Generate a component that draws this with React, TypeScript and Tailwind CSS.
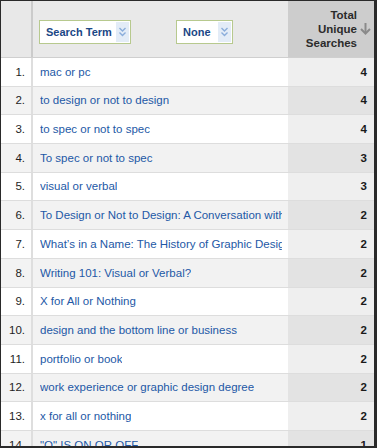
import React from 'react'

const rows = [
  { term: 'mac or pc', count: 4 },
  { term: 'to design or not to design', count: 4 },
  { term: 'to spec or not to spec', count: 4 },
  { term: 'To spec or not to spec', count: 3 },
  { term: 'visual or verbal', count: 3 },
  { term: 'To Design or Not to Design: A Conversation with the Experts', count: 2 },
  { term: 'What\u2019s in a Name: The History of Graphic Design', count: 2 },
  { term: 'Writing 101: Visual or Verbal?', count: 2 },
  { term: 'X for All or Nothing', count: 2 },
  { term: 'design and the bottom line or business', count: 2 },
  { term: 'portfolio or book', count: 2 },
  { term: 'work experience or graphic design degree', count: 2 },
  { term: 'x for all or nothing', count: 2 },
  { term: '"O" IS ON OR OFF', count: 1 },
]

function Chevrons() {
  return (
    <svg width="9" height="12" viewBox="0 0 9 12" fill="none">
      <polyline points="1.5,2 4.5,5 7.5,2" stroke="#8aaddb" strokeWidth="1.4" />
      <polyline points="1.5,6.5 4.5,9.5 7.5,6.5" stroke="#8aaddb" strokeWidth="1.4" />
    </svg>
  )
}

function Dropdown({ label, width }: { label: string; width: string }) {
  return (
    <div className={`flex h-[24px] ${width} items-stretch border border-[#b7c98e] bg-white p-px`}>
      <div className="flex flex-1 items-center whitespace-nowrap pl-[5px] text-[11px] font-bold text-[#1b4786]">{label}</div>
      <div className="flex w-[13px] shrink-0 items-center justify-center bg-[#e3ecf7]">
        <Chevrons />
      </div>
    </div>
  )
}

export default function App() {
  return (
    <div className="h-[448px] w-[377px] overflow-hidden border-b-2 border-l border-r-[3px] border-t border-[#2a2a2a] bg-white font-['Liberation_Sans',Arial,sans-serif]">
      {/* header */}
      <div className="grid h-[57px] grid-cols-[32px_255px_86px] border-b border-[#cfcfcf]">
        <div className="border-r-2 border-[#cbcbcb] bg-[#e8e8e8]" />
        <div className="flex items-start gap-[45px] bg-[#e9e9e9] pl-[6px] pt-[19px]">
          <Dropdown label="Search Term" width="w-[92px]" />
          <Dropdown label="None" width="w-[57px]" />
        </div>
        <div className="flex items-start justify-end bg-[#cdcdcd] pt-[7px]">
          <div className="text-right text-[11.5px] font-bold leading-[14px] text-[#2b2b2b]">
            <div>Total</div>
            <div>Unique</div>
            <div>Searches</div>
          </div>
          <svg className="ml-[2px] mr-[2px] mt-[14px] shrink-0" width="13" height="13" viewBox="0 0 13 13" fill="none">
            <line x1="6.5" y1="1" x2="6.5" y2="11" stroke="#8a8a8a" strokeWidth="2" />
            <polyline points="2,7 6.5,11.5 11,7" stroke="#8a8a8a" strokeWidth="2" fill="none" />
          </svg>
        </div>
      </div>

      {/* rows */}
      {rows.map((row, i) => {
        const even = i % 2 === 1
        return (
          <div
            key={i}
            className="grid h-[28.7px] grid-cols-[32px_255px_86px] border-b border-[#dddddd] text-[11.5px]"
          >
            <div
              className={`flex items-center justify-end border-r-2 border-[#dedede] pr-[6px] pt-px text-[#1e1e1e] ${
                even ? 'bg-[#f3f3f3]' : 'bg-white'
              }`}
            >
              {i + 1}.
            </div>
            <div
              className={`flex items-center overflow-hidden whitespace-nowrap pl-[7px] pr-[6px] pt-px text-[#2358a6] ${
                even ? 'bg-[#f2f2f2]' : 'bg-white'
              }`}
            >
              <span className="overflow-hidden">{row.term}</span>
            </div>
            <div
              className={`flex items-center justify-end pr-[7px] pt-px font-bold text-[#1a1a1a] ${
                even ? 'bg-[#e3e3e3]' : 'bg-[#efefef]'
              }`}
            >
              {row.count}
            </div>
          </div>
        )
      })}
    </div>
  )
}
